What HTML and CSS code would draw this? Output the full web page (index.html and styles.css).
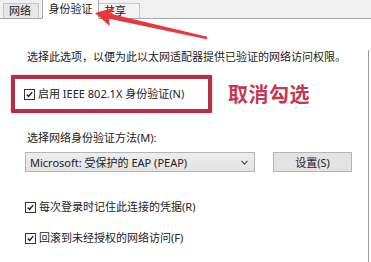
FILE: index.html
```html
<!DOCTYPE html>
<html lang="zh-CN">
<head>
<meta charset="utf-8">
<title>以太网属性 - 身份验证</title>
<link rel="stylesheet" href="styles.css">
</head>
<body>
<div class="window">
  <div class="tabs">
    <div class="tab">网络</div>
    <div class="tab active">身份验证</div>
    <div class="tab">共享</div>
  </div>
  <div class="panel">
    <p class="desc">选择此选项，以便为此以太网适配器提供已验证的网络访问权限。</p>
    <div class="highlight-row">
      <div class="redbox">
        <label class="check">
          <span class="box"><svg viewBox="0 0 11 11" width="11" height="11"><path d="M2.2 5.6 L4.4 8 L8.8 2.6" fill="none" stroke="#1a1a1a" stroke-width="1.7"/></svg></span>
          <span>启用 IEEE 802.1X 身份验证(N)</span>
        </label>
      </div>
      <div class="note">取消勾选</div>
    </div>
    <p class="label">选择网络身份验证方法(M):</p>
    <div class="method-row">
      <div class="select">
        <span>Microsoft: 受保护的 EAP (PEAP)</span>
        <svg class="chev" viewBox="0 0 7 5" width="7" height="5"><path d="M0.5 0.8 L3.5 4 L6.5 0.8" fill="none" stroke="#555" stroke-width="1.2"/></svg>
      </div>
      <div class="button">设置(S)</div>
    </div>
    <label class="check spaced1">
      <span class="box"><svg viewBox="0 0 11 11" width="11" height="11"><path d="M2.2 5.6 L4.4 8 L8.8 2.6" fill="none" stroke="#1a1a1a" stroke-width="1.7"/></svg></span>
      <span>每次登录时记住此连接的凭据(R)</span>
    </label>
    <label class="check spaced2">
      <span class="box"><svg viewBox="0 0 11 11" width="11" height="11"><path d="M2.2 5.6 L4.4 8 L8.8 2.6" fill="none" stroke="#1a1a1a" stroke-width="1.7"/></svg></span>
      <span>回滚到未经授权的网络访问(F)</span>
    </label>
  </div>
  <svg class="arrow" viewBox="0 0 371 262" width="371" height="262">
    <polygon points="95,13 114.6,7.6 110.3,13.8 207.3,36.8 206.8,39.2 109.1,18.8 109.8,26" fill="#e8383c"/>
  </svg>
</div>
</body>
</html>
```

FILE: styles.css
```css
html, body {
  margin: 0;
  padding: 0;
  background: #ffffff;
}

.window {
  position: relative;
  width: 371px;
  height: 262px;
  overflow: hidden;
  font-family: "Noto Sans", "Noto Sans CJK SC", sans-serif;
  font-size: 11px;
  color: #222;
  background: #fff;
}

.tabs {
  display: flex;
  align-items: flex-end;
  height: 18px;
  padding-left: 3px;
  background: #f0f0f0;
  border-bottom: 1px solid #a8a8a8;
}

.tab {
  height: 14px;
  line-height: 14px;
  padding: 0 5px;
  margin-bottom: -1px;
  border: 1px solid #c6c6c6;
  border-bottom: 1px solid #a8a8a8;
  background: #e7e7e7;
  font-size: 11px;
  color: #222;
}

.tab:first-child {
  width: 24px;
  margin-right: 3px;
}

.tab.active {
  height: 18px;
  line-height: 18px;
  padding: 0 5px;
  width: 45px;
  background: #fff;
  border-color: #a8a8a8;
  border-bottom-color: #fff;
  text-align: center;
}

.tab:last-child {
  width: 30px;
  border-left: none;
  background: #f3f3f3;
}

.panel {
  height: 243px;
  margin-right: 2px;
  padding-left: 25px;
  border-right: 1px solid #9c9c9c;
  box-sizing: border-box;
}

.desc {
  margin: 31px 0 0 2px;
  line-height: 14px;
}

.highlight-row {
  display: flex;
  align-items: center;
  margin-top: 11px;
  margin-left: -14px;
}

.redbox {
  width: 184px;
  height: 30px;
  padding-left: 9px;
  border: 4px solid #b2304a;
  border-radius: 1px;
  box-shadow: 0 0 2px rgba(178, 48, 74, 0.5);
  display: flex;
  align-items: center;
  box-sizing: content-box;
}

.note {
  margin-left: 16px;
  font-family: "Noto Sans CJK SC", sans-serif;
  font-size: 20px;
  font-weight: 700;
  color: #c43850;
  line-height: 24px;
  letter-spacing: 0.5px;
}

.check {
  display: flex;
  align-items: center;
  height: 14px;
  line-height: 14px;
}

.box {
  width: 11px;
  height: 11px;
  border: 1px solid #333;
  box-sizing: border-box;
  background: #fff;
  margin-right: 3px;
  display: flex;
  align-items: center;
  justify-content: center;
  flex: none;
}

.box svg {
  width: 9px;
  height: 9px;
}

.label {
  margin: 18px 0 0 2px;
  line-height: 14px;
}

.method-row {
  display: flex;
  margin-top: 7px;
  height: 20px;
}

.select {
  width: 230px;
  height: 20px;
  box-sizing: border-box;
  border: 1px solid #b4b4b4;
  background: linear-gradient(#ededed, #e3e3e3);
  display: flex;
  align-items: center;
  justify-content: space-between;
  padding: 0 6px 0 4px;
}

.chev {
  flex: none;
}

.button {
  margin-left: 18px;
  width: 79px;
  height: 20px;
  box-sizing: border-box;
  border: 1px solid #b4b4b4;
  background: #e3e3e3;
  display: flex;
  align-items: center;
  justify-content: center;
}

.spaced1 {
  margin-top: 28px;
}

.spaced2 {
  margin-top: 17px;
}

.arrow {
  position: absolute;
  left: 0;
  top: 0;
  pointer-events: none;
}
```
